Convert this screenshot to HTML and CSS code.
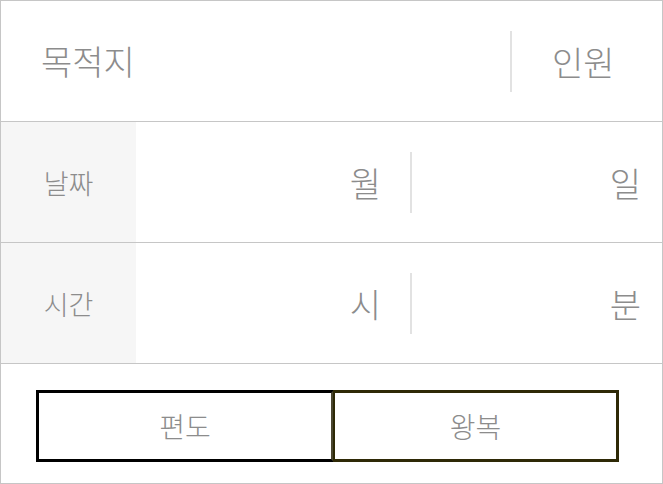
FILE: index.html
```html
<!DOCTYPE html>
<html lang="ko">
<head>
<meta charset="utf-8">
<link rel="stylesheet" href="styles.css">
</head>
<body>
<div class="form">
  <div class="row row-top">
    <div class="dest">목적지</div>
    <div class="people">인원</div>
  </div>
  <div class="row">
    <div class="label">날짜</div>
    <div class="cell cell-a">월</div>
    <div class="cell cell-b">일</div>
  </div>
  <div class="row">
    <div class="label">시간</div>
    <div class="cell cell-a">시</div>
    <div class="cell cell-b">분</div>
  </div>
  <div class="row row-btns">
    <div class="btn btn-one">편도</div>
    <div class="btn btn-round">왕복</div>
  </div>
</div>
</body>
</html>
```
FILE: styles.css
```css
* { box-sizing: border-box; }
html, body { margin: 0; padding: 0; background: #fff; }
body {
  font-family: "Noto Sans CJK KR", "Noto Sans", sans-serif;
  font-weight: 300;
  color: #8c8c8c;
}
.form {
  width: 663px;
  height: 484px;
  border: 1px solid #c6c6c6;
  display: flex;
  flex-direction: column;
}
.row {
  height: 121px;
  display: flex;
  align-items: stretch;
  border-bottom: 1px solid #c6c6c6;
}
.row-top { align-items: center; }
.row-btns { border-bottom: none; flex: 1; align-items: flex-start; padding: 26px 0 0 35px; }
.dest {
  flex: 1;
  font-size: 34px;
  line-height: 1;
  padding-left: 40px;
}
.people {
  width: 152px;
  height: 61px;
  border-left: 2px solid #e2e2e2;
  font-size: 34px;
  display: flex;
  align-items: center;
  padding-left: 40px;
}
.label {
  width: 135px;
  background: #f6f6f6;
  font-size: 27px;
  display: flex;
  align-items: center;
  justify-content: center;
}
.cell {
  font-size: 34px;
  display: flex;
  align-items: center;
  justify-content: flex-end;
}
.cell-a {
  width: 274px;
  padding-right: 29px;
}
.cell-b {
  flex: 1;
  padding-right: 21px;
  border-left: 2px solid #e2e2e2;
  margin: 30px 0 29px;
}
.btn {
  height: 72px;
  font-size: 28px;
  display: flex;
  align-items: center;
  justify-content: center;
  background: #fff;
}
.btn-one {
  width: 298px;
  border: 3px solid #000;
  border-right: 3px solid #4a4630;
}
.btn-round {
  width: 286px;
  margin-left: -1px;
  border: 3px solid #2e2906;
  border-left: 2px solid #2e2906;
}
```
